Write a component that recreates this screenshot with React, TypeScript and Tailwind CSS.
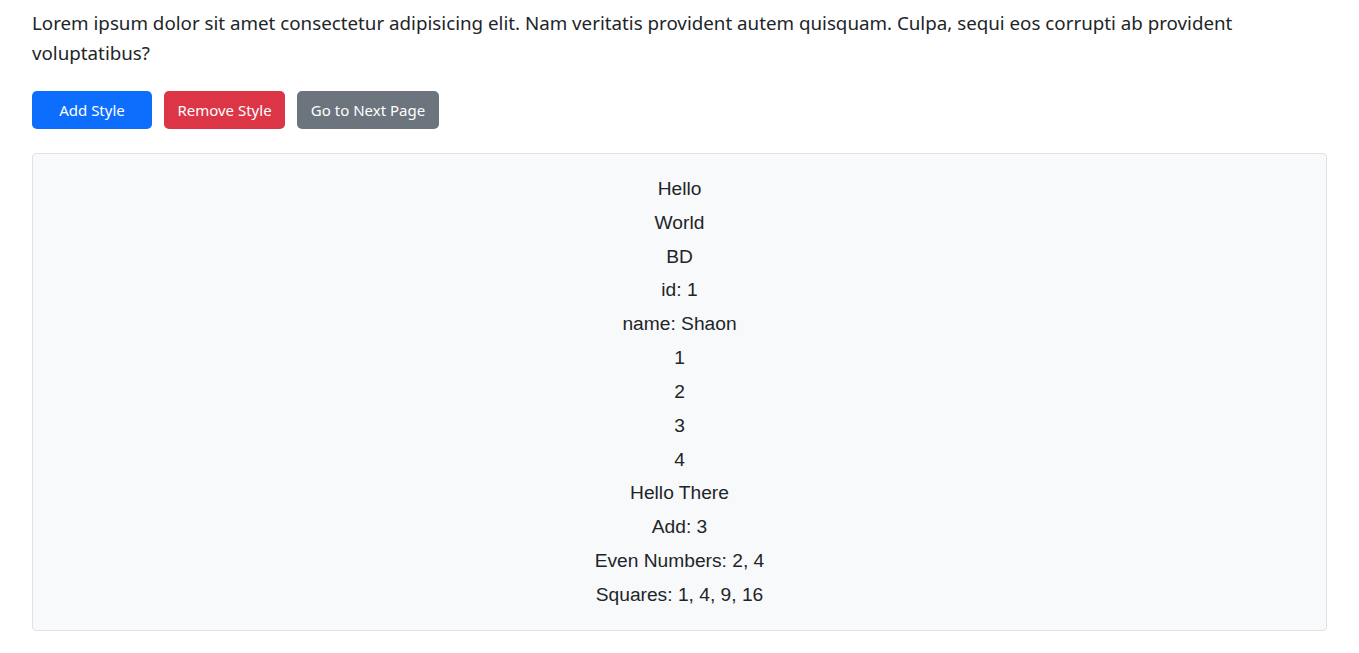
import React from "react";

const lines = [
  "Hello",
  "World",
  "BD",
  "id: 1",
  "name: Shaon",
  "1",
  "2",
  "3",
  "4",
  "Hello There",
  "Add: 3",
  "Even Numbers: 2, 4",
  "Squares: 1, 4, 9, 16",
];

export default function App() {
  return (
    <div className="min-h-screen bg-white px-8 pt-2 text-[#212529]">
      <p
        className="mb-[23px] max-w-[1280px] text-[18.75px] leading-[30px]"
        style={{ fontFamily: '"Noto Sans", "Open Sans", sans-serif' }}
      >
        Lorem ipsum dolor sit amet consectetur adipisicing elit. Nam veritatis provident autem quisquam. Culpa, sequi eos
        corrupti ab provident voluptatibus?
      </p>
      <div
        className="flex gap-3 text-[15px] text-white"
        style={{ fontFamily: '"Noto Sans", "Open Sans", sans-serif' }}
      >
        <button className="h-[38px] w-[120px] rounded-[5px] bg-[#0d6efd]">Add Style</button>
        <button className="h-[38px] w-[121px] rounded-[5px] bg-[#dc3545]">Remove Style</button>
        <button className="h-[38px] w-[142px] rounded-[5px] bg-[#6c757d]">Go to Next Page</button>
      </div>
      <div
        className="mt-6 flex flex-col items-center rounded-[4px] border border-[#dee2e6] bg-[#f8f9fa] pt-[18px] pb-[18px] text-[19.2px] leading-[33.83px]"
        style={{ fontFamily: '"Liberation Sans", Arial, sans-serif' }}
      >
        {lines.map((l, i) => (
          <div key={i}>{l}</div>
        ))}
      </div>
    </div>
  );
}
